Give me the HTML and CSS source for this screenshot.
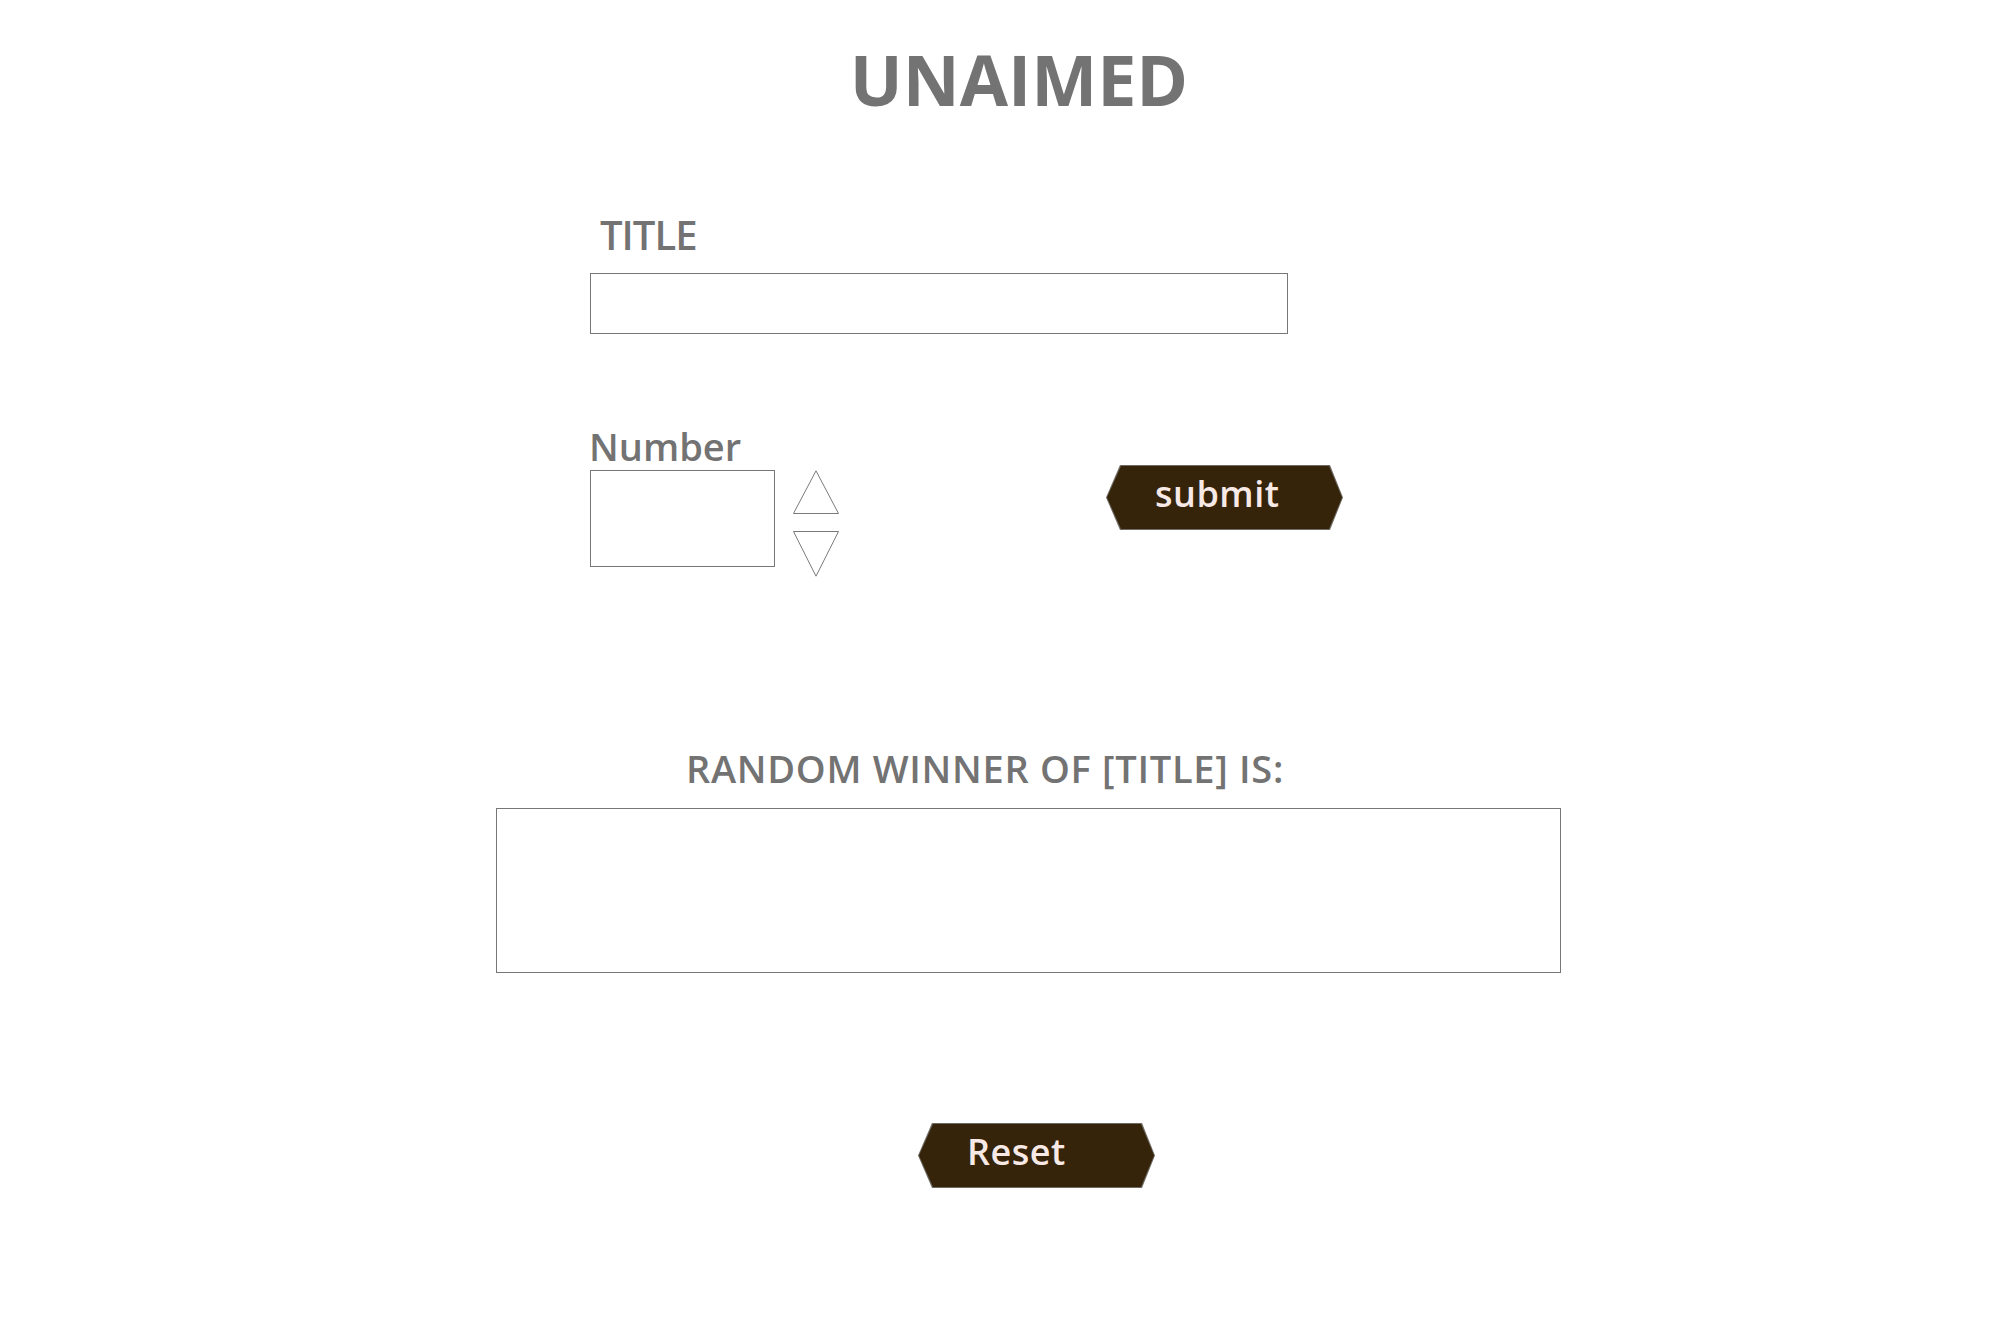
FILE: index.html
```html
<!DOCTYPE html>
<html lang="en">
<head>
<meta charset="utf-8">
<title>UNAIMED</title>
<link rel="stylesheet" href="styles.css">
</head>
<body>
<main class="page">
  <h1 class="brand">UNAIMED</h1>

  <section class="title-field">
    <label class="label label-title" for="title">TITLE</label>
    <input id="title" class="text-input" type="text">
  </section>

  <section class="number-row">
    <div class="number-field">
      <label class="label label-number" for="num">Number</label>
      <input id="num" class="number-input" type="text">
    </div>
    <div class="spinner">
      <svg class="tri" width="46" height="44" viewBox="0 0 46 44"><polygon points="0.5,43.5 23,0.8 45.5,43.5" fill="none" stroke="#7a7a7a" stroke-width="1"/></svg>
      <svg class="tri" width="46" height="46" viewBox="0 0 46 46"><polygon points="0.5,0.5 45.5,0.5 23,45.2" fill="none" stroke="#7a7a7a" stroke-width="1"/></svg>
    </div>
    <button class="hex-btn submit-btn" type="button"><span class="hex-inner">submit</span></button>
  </section>

  <h2 class="result-label">RANDOM WINNER OF [TITLE] IS:</h2>
  <div class="result-box"></div>

  <button class="hex-btn reset-btn" type="button"><span class="hex-inner">Reset</span></button>
</main>
</body>
</html>
```

FILE: styles.css
```css
html, body {
  margin: 0;
  padding: 0;
  background: #ffffff;
}

body {
  font-family: "Open Sans", "Noto Sans", sans-serif;
  color: #737373;
}

.page {
  display: block;
}

.brand {
  margin: 39px 0 0;
  padding-left: 34px;
  text-align: center;
  font-size: 70px;
  font-weight: 700;
  line-height: 80px;
}

.label {
  display: block;
  font-weight: 600;
}

.title-field {
  margin-top: 91px;
  padding-left: 590px;
}

.label-title {
  margin-left: 10px;
  font-size: 40px;
  line-height: 50px;
  letter-spacing: -1px;
}

.text-input {
  display: block;
  box-sizing: border-box;
  margin-top: 13px;
  width: 698px;
  height: 61px;
  border: 1px solid #777777;
  background: #ffffff;
  padding: 0;
  outline: none;
}

.number-row {
  display: flex;
  align-items: flex-start;
  margin-top: 89px;
  padding-left: 589px;
}

.label-number {
  font-size: 38px;
  line-height: 46px;
}

.number-input {
  display: block;
  box-sizing: border-box;
  margin: 1px 0 0 1px;
  width: 185px;
  height: 97px;
  border: 1px solid #777777;
  background: #ffffff;
  padding: 0;
  outline: none;
}

.spinner {
  display: flex;
  flex-direction: column;
  gap: 17px;
  margin: 47px 0 0 18px;
}

.tri {
  display: block;
}

.hex-btn {
  display: flex;
  box-sizing: border-box;
  width: 237px;
  height: 65px;
  padding: 0;
  border: none;
  background: #6e6a64;
  font-family: inherit;
  cursor: pointer;
  clip-path: polygon(14px 0, calc(100% - 13px) 0, 100% 50%, calc(100% - 13px) 100%, 14px 100%, 0 50%);
}

.hex-inner {
  display: block;
  flex: 1;
  margin: 1px;
  padding-left: 48px;
  background: #35230a;
  color: #f7e9e6;
  font-size: 36px;
  font-weight: 600;
  line-height: 56px;
  letter-spacing: 0.5px;
  text-align: left;
  clip-path: polygon(14px 0, calc(100% - 13px) 0, 100% 50%, calc(100% - 13px) 100%, 14px 100%, 0 50%);
}

.submit-btn {
  margin: 42px 0 0 267px;
}

.result-label {
  margin: 168px 0 0;
  padding-left: 686px;
  font-size: 38px;
  font-weight: 600;
  line-height: 46px;
  letter-spacing: 0.7px;
}

.result-box {
  box-sizing: border-box;
  margin: 17px 0 0 496px;
  width: 1065px;
  height: 165px;
  border: 1px solid #777777;
}

.reset-btn {
  margin: 150px 0 0 918px;
}
```
